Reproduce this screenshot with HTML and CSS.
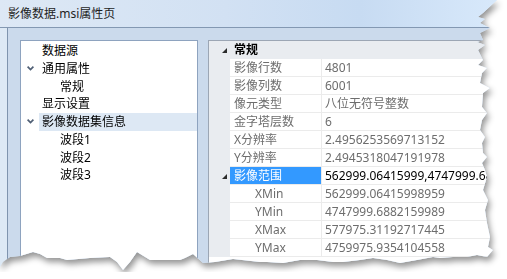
FILE: index.html
```html
<!DOCTYPE html>
<html>
<head>
<meta charset="utf-8"/>
<title>影像数据.msi属性页</title>
<link rel="stylesheet" href="styles.css">
</head>
<body>
<div class="shot">
  <div class="window">
    <div class="titlebar">影像数据.msi属性页</div>
    <div class="client">
      <div class="tree">
        <div class="node"><span class="twisty"></span><span class="label">数据源</span></div>
        <div class="node"><span class="twisty"><svg width="7" height="5" viewBox="0 0 7 5"><path d="M0.6 0.6 L3.5 3.5 L6.4 0.6" fill="none" stroke="#4f5f75" stroke-width="1.7"/></svg></span><span class="label">通用属性</span></div>
        <div class="node sub"><span class="twisty"></span><span class="label">常规</span></div>
        <div class="node"><span class="twisty"></span><span class="label">显示设置</span></div>
        <div class="node"><span class="twisty"><svg width="7" height="5" viewBox="0 0 7 5"><path d="M0.6 0.6 L3.5 3.5 L6.4 0.6" fill="none" stroke="#4f5f75" stroke-width="1.7"/></svg></span><span class="label current">影像数据集信息</span></div>
        <div class="node sub"><span class="twisty"></span><span class="label">波段1</span></div>
        <div class="node sub"><span class="twisty"></span><span class="label">波段2</span></div>
        <div class="node sub"><span class="twisty"></span><span class="label">波段3</span></div>
      </div>

      <div class="grid">
        <div class="prow head">
          <span class="gutter"><svg width="5" height="5" viewBox="0 0 5 5"><polygon points="5,0 5,5 0,5" fill="#2b2b2b"/></svg></span>
          <span class="cat">常规</span>
        </div>
        <div class="prow"><span class="gutter"></span><span class="pname">影像行数</span><span class="pval">4801</span></div>
        <div class="prow"><span class="gutter"></span><span class="pname">影像列数</span><span class="pval">6001</span></div>
        <div class="prow"><span class="gutter"></span><span class="pname">像元类型</span><span class="pval">八位无符号整数</span></div>
        <div class="prow"><span class="gutter"></span><span class="pname">金字塔层数</span><span class="pval">6</span></div>
        <div class="prow"><span class="gutter"></span><span class="pname">X分辨率</span><span class="pval">2.4956253569713152</span></div>
        <div class="prow"><span class="gutter"></span><span class="pname">Y分辨率</span><span class="pval">2.4945318047191978</span></div>
        <div class="prow selected">
          <span class="gutter"><svg width="5" height="5" viewBox="0 0 5 5"><polygon points="5,0 5,5 0,5" fill="#2b2b2b"/></svg></span>
          <span class="pname">影像范围</span><span class="pval">562999.06415999,4747999.6882159989</span>
        </div>
        <div class="prow child"><span class="gutter"></span><span class="pname">XMin</span><span class="pval">562999.06415998959</span></div>
        <div class="prow child"><span class="gutter"></span><span class="pname">YMin</span><span class="pval">4747999.6882159989</span></div>
        <div class="prow child"><span class="gutter"></span><span class="pname">XMax</span><span class="pval">577975.31192717445</span></div>
        <div class="prow child"><span class="gutter"></span><span class="pname">YMax</span><span class="pval">4759975.9354104558</span></div>
      </div>
    </div>
  </div>
</div>
</body>
</html>
```

FILE: styles.css
```css
body {
  margin: 0;
  background: #fff;
  font-family: "Noto Sans", "Noto Sans CJK SC", sans-serif;
  font-size: 12px;
}

/* torn screenshot with its drop shadow */
.shot {
  width: 500px;
  height: 272px;
  filter: drop-shadow(2px 4px 3px rgba(0, 0, 0, 0.42));
}

.window {
  width: 500px;
  height: 272px;
  display: flex;
  flex-direction: column;
  background: #dde9f5;
  clip-path: polygon(0 0, 497px 0, 483px 13px, 478px 17px, 485px 19px, 480px 23px, 490px 28px, 480px 33px,
    483px 40px, 477px 42px, 485px 45px, 478px 50px, 483px 60px, 478px 65px, 487px 68px, 482px 73px,
    480px 83px, 490px 88px, 483px 93px, 482px 107px, 487px 113px, 482px 120px, 480px 130px, 485px 137px,
    482px 143px, 483px 153px, 487px 157px, 482px 163px, 485px 170px, 487px 177px, 483px 190px, 488px 200px,
    485px 210px, 487px 223px, 490px 237px, 488px 247px, 493px 250px, 487px 257px, 477px 255px, 467px 257px,
    453px 257px, 440px 258px, 433px 257px, 417px 260px, 400px 263px, 387px 260px, 373px 258px, 360px 260px,
    343px 262px, 333px 262px, 317px 260px, 300px 260px, 283px 263px, 267px 262px, 260px 262px, 233px 259px,
    215px 262px, 203px 263px, 193px 254px, 185px 258px, 180px 260px, 150px 260px, 137px 252px, 130px 262px,
    123px 270px, 117px 262px, 110px 257px, 90px 258px, 67px 260px, 60px 258px, 47px 258px, 40px 254px,
    33px 252px, 20px 256px, 10px 257px, 3px 262px, 0 267px);
}

.titlebar {
  height: 27px;
  line-height: 27px;
  padding-left: 8px;
  color: #1e1e1e;
  border-bottom: 1px solid #8398b2;
  background: linear-gradient(to right, #dde8f5 0%, #d2e1f3 45%, #c7dbf2 72%, #d8e9fb 100%);
}

.client {
  flex: 1;
  display: flex;
  gap: 10px;
  margin-left: 7px;
  padding: 12px 0 0 12px;
  border-left: 1px solid #7f94ae;
  background: #cbdaec;
  min-width: 0;
}

/* left tree */
.tree {
  box-sizing: border-box;
  width: 178px;
  flex-shrink: 0;
  padding-top: 1px;
  background: #fff;
  border: 1px solid #8ea3bf;
  border-bottom: none;
}

.node {
  display: flex;
  height: 17.75px;
  line-height: 17.75px;
  color: #000;
  white-space: nowrap;
}

.twisty {
  width: 18px;
  display: flex;
  align-items: center;
  justify-content: center;
  flex-shrink: 0;
}

.node.sub .twisty {
  width: 36px;
}

.label {
  flex: 1;
  padding-left: 3px;
}

.label.current {
  background: #dde8f4;
}

/* property grid */
.grid {
  flex: 1;
  min-width: 0;
  overflow: hidden;
  background: #fff;
  border-top: 1px solid #9ca6b4;
  border-left: 1px solid #9ca6b4;
}

.prow {
  display: flex;
  height: 18px;
  line-height: 17px;
  color: #6d6d6d;
}

.gutter {
  width: 21px;
  flex-shrink: 0;
  display: flex;
  align-items: center;
  justify-content: flex-end;
  padding-right: 3px;
  box-sizing: border-box;
  background: #e9ecf0;
}

.prow.head {
  background: #e9ecf0;
  line-height: 18px;
}

.cat {
  padding-left: 4px;
  font-weight: 700;
  color: #000;
}

.pname, .pval {
  height: 17px;
  border-bottom: 1px solid #ebebeb;
  padding-left: 4px;
  white-space: nowrap;
  overflow: hidden;
}

.pname {
  width: 87px;
  flex-shrink: 0;
  border-right: 1px solid #ebebeb;
}

.pval {
  flex: 1;
  min-width: 0;
  padding-left: 3px;
}

.prow.child .pname {
  width: 66px;
  padding-left: 25px;
}

.prow.selected .pname {
  background: #3399ff;
  color: #fff;
}

.prow.selected .pval {
  color: #000;
}
```
